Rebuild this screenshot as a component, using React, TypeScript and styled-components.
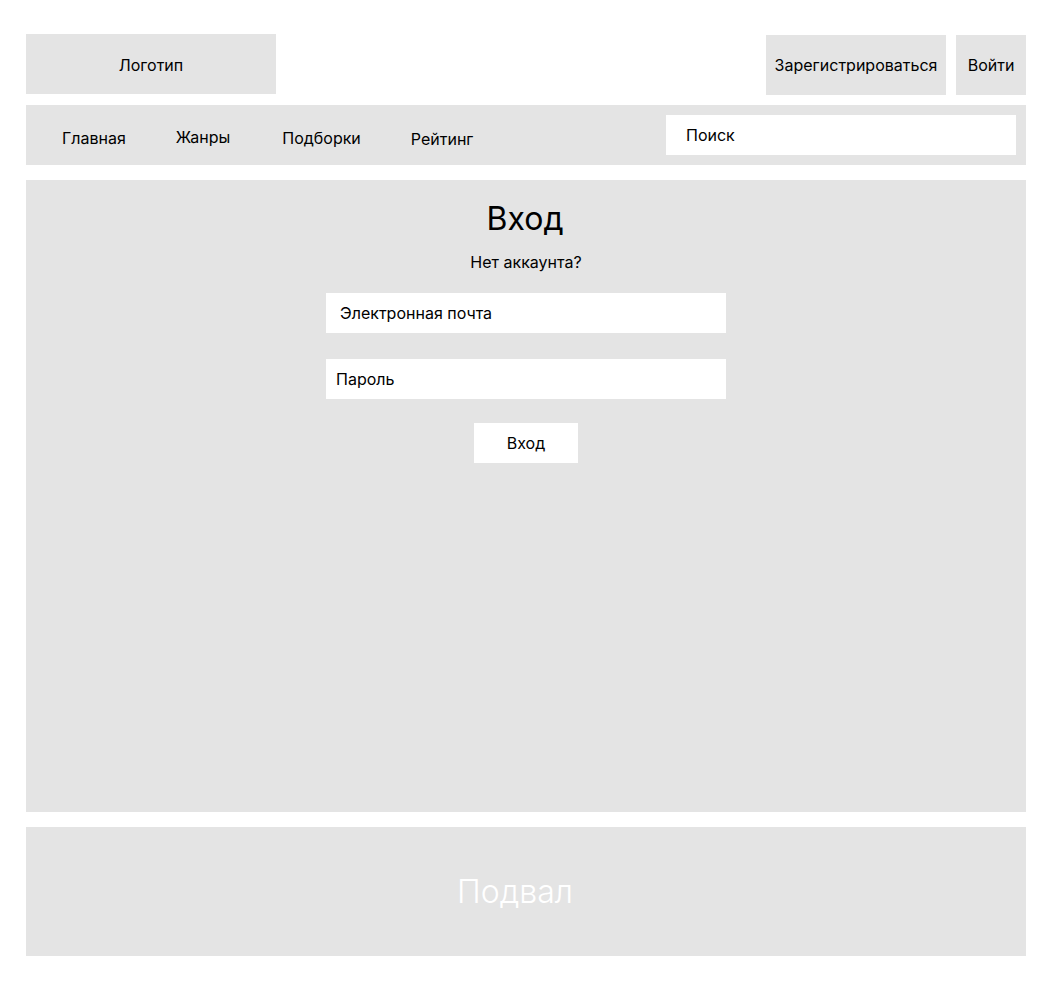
import styled, { createGlobalStyle } from "styled-components"

const GlobalStyle = createGlobalStyle`
    body {
        margin: 0;
        background: #ffffff;
        font-family: Inter, "Noto Sans", sans-serif;
        color: #000000;
    }
`

const navItems = [
    { label: "Главная", shift: 0, extra: 0 },
    { label: "Жанры", shift: -1, extra: 0 },
    { label: "Подборки", shift: 0, extra: 2 },
    { label: "Рейтинг", shift: 1, extra: 0 },
]

export default function App() {
    return (
        <>
            <GlobalStyle/>
            <Page>
                <Header>
                    <Logo>Логотип</Logo>
                    <Actions>
                        <HeaderButton $width={180}>Зарегистрироваться</HeaderButton>
                        <HeaderButton $width={70}>Войти</HeaderButton>
                    </Actions>
                </Header>
                <Nav>
                    <NavList>
                        {navItems.map(item => (
                            <NavItem key={item.label} $shift={item.shift} $extra={item.extra}>
                                {item.label}
                            </NavItem>
                        ))}
                    </NavList>
                    <Search>Поиск</Search>
                </Nav>
                <Main>
                    <Title>Вход</Title>
                    <Subtitle>Нет аккаунта?</Subtitle>
                    <Field $pad={14}>Электронная почта</Field>
                    <Field $pad={10}>Пароль</Field>
                    <Submit>Вход</Submit>
                </Main>
                <Footer>Подвал</Footer>
            </Page>
        </>
    )
}

const Page = styled.div`
    width: 1000px;
    padding: 34px 0 38px 26px;
    display: flex;
    flex-direction: column;
`
const Header = styled.div`
    display: flex;
    justify-content: space-between;
    align-items: flex-start;
    height: 61px;
`
const Logo = styled.div`
    width: 250px;
    height: 60px;
    display: flex;
    align-items: center;
    justify-content: center;
    background: #e4e4e4;
    font-size: 16px;
    padding-top: 1px;
    box-sizing: border-box;
`
const Actions = styled.div`
    display: flex;
    gap: 10px;
    margin-top: 1px;
`
const HeaderButton = styled.div<{ $width: number }>`
    width: ${p => p.$width}px;
    height: 60px;
    display: flex;
    align-items: center;
    justify-content: center;
    background: #e4e4e4;
    font-size: 16px;
    white-space: nowrap;
`
const Nav = styled.div`
    margin-top: 10px;
    height: 60px;
    padding: 0 10px 0 36px;
    display: flex;
    align-items: center;
    justify-content: space-between;
    background: #e4e4e4;
`
const NavList = styled.div`
    display: flex;
    gap: 50px;
    margin-top: 6px;
`
const NavItem = styled.div<{ $shift: number; $extra: number }>`
    margin-left: ${p => p.$extra}px;
    font-size: 16px;
    transform: translateY(${p => p.$shift}px);
`
const Search = styled.div`
    width: 330px;
    height: 40px;
    padding-left: 20px;
    display: flex;
    align-items: center;
    background: #ffffff;
    font-size: 16px;
`
const Main = styled.div`
    margin-top: 15px;
    height: 632px;
    box-sizing: border-box;
    padding-top: 19px;
    display: flex;
    flex-direction: column;
    align-items: center;
    background: #e4e4e4;
`
const Title = styled.div`
    font-size: 32px;
    line-height: 39px;
    margin-left: -2px;
`
const Subtitle = styled.div`
    margin-top: 15px;
    margin-bottom: 21px;
    font-size: 16px;
    line-height: 19px;
`
const Field = styled.div<{ $pad: number }>`
    width: 400px;
    height: 40px;
    box-sizing: border-box;
    padding-left: ${p => p.$pad}px;
    margin-bottom: 26px;
    display: flex;
    align-items: center;
    background: #ffffff;
    font-size: 16px;
    &:last-of-type {
        margin-bottom: 24px;
    }
`
const Submit = styled.div`
    margin-top: -2px;
    width: 104px;
    height: 40px;
    display: flex;
    align-items: center;
    justify-content: center;
    background: #ffffff;
    font-size: 16px;
`
const Footer = styled.div`
    margin-top: 15px;
    height: 129px;
    padding-right: 22px;
    display: flex;
    align-items: center;
    justify-content: center;
    background: #e4e4e4;
    color: #ffffff;
    font-size: 32px;
    font-weight: 300;
`
